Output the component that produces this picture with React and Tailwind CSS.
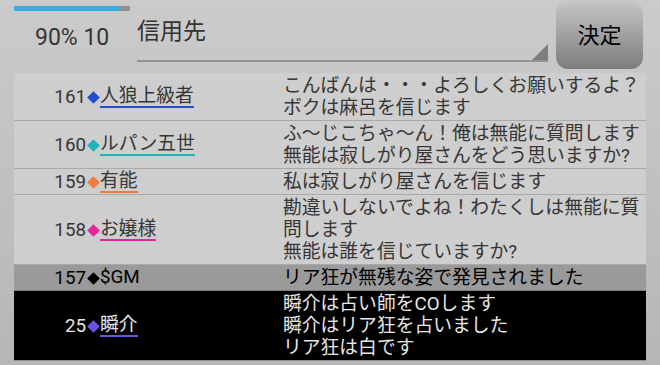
import React from 'react'

const rows = [
  {
    no: 161,
    name: '人狼上級者',
    mark: 'bg-[#2350c8]',
    line: 'border-[#2350c8]',
    theme: 'light',
    text: ['こんばんは・・・よろしくお願いするよ？', 'ボクは麻呂を信じます'],
  },
  {
    no: 160,
    name: 'ルパン五世',
    mark: 'bg-[#1fb5b5]',
    line: 'border-[#1fb5b5]',
    theme: 'light',
    text: ['ふ〜じこちゃ〜ん！俺は無能に質問します', '無能は寂しがり屋さんをどう思いますか?'],
  },
  {
    no: 159,
    name: '有能',
    mark: 'bg-[#f07b3c]',
    line: 'border-[#f07b3c]',
    theme: 'light',
    text: ['私は寂しがり屋さんを信じます'],
  },
  {
    no: 158,
    name: 'お嬢様',
    mark: 'bg-[#e2279b]',
    line: 'border-[#e2279b]',
    theme: 'light',
    text: ['勘違いしないでよね！わたくしは無能に質', '問します', '無能は誰を信じていますか?'],
  },
  {
    no: 157,
    name: '$GM',
    mark: 'bg-black',
    line: 'border-transparent',
    theme: 'gm',
    text: ['リア狂が無残な姿で発見されました'],
  },
  {
    no: 25,
    name: '瞬介',
    mark: 'bg-[#6a52e6]',
    line: 'border-[#6a52e6]',
    theme: 'dark',
    text: ['瞬介は占い師をCOします', '瞬介はリア狂を占いました', 'リア狂は白です'],
  },
]

const themes = {
  light: 'bg-[#cecece] text-[#363636] border-[#a9a9a9]',
  gm: 'bg-[#9a9a9a] text-black border-[#7c7c7c]',
  dark: 'bg-black text-[#e6e6e6] border-[#8e8e8e]',
}

function LogRow({ row }) {
  return (
    <div className={`flex border-b pt-[2px] pb-[1px] ${themes[row.theme]}`}>
      <div className="w-[269px] flex items-center">
        <span className="w-[72px] text-right leading-[20px]">{row.no}</span>
        <span className="w-[14px] flex justify-center">
          <span className={`w-[9px] h-[9px] rotate-45 ${row.mark}`} />
        </span>
        <span className={`leading-[20px] border-b-2 ${row.line}`}>{row.name}</span>
      </div>
      <div className="flex-1 leading-[22px]">
        {row.text.map((t, i) => (
          <div key={i} className="whitespace-nowrap">{t}</div>
        ))}
      </div>
    </div>
  )
}

export default function App() {
  return (
    <div
      className="w-[660px] h-[365px] overflow-hidden bg-linear-to-b from-[#cbcbcb] to-[#b6b6b6]"
      style={{ fontFamily: "Roboto, 'Noto Sans CJK JP', sans-serif" }}
    >
      {/* header */}
      <div className="flex h-[73px]">
        <div className="w-[123px] pl-[14px] pt-[6px]">
          <div className="w-[116px] h-[5px] flex bg-[#919191]">
            <div className="w-[105px] bg-[#39afdf]" />
          </div>
          <div className="pl-[21px] mt-[12px] text-[23px] leading-[30px] text-[#353535]">90% 10</div>
        </div>
        <div className="ml-[14px] w-[411px] h-[62px] pt-[17px] border-b-2 border-[#929292] relative">
          <div className="text-[23px] leading-[30px] text-[#333]">信用先</div>
          <svg className="absolute right-0 bottom-0" width="16" height="16" viewBox="0 0 16 16">
            <polygon points="16,0 16,16 0,16" fill="#7d7d7d" />
          </svg>
        </div>
        <button className="ml-[8px] mt-[1px] w-[87px] h-[68px] rounded-[12px] bg-linear-to-b from-[#c6c6c6] to-[#7d7d7d] text-[22px] text-black flex items-center justify-center">
          決定
        </button>
      </div>

      {/* log list */}
      <div className="ml-[14px] w-[632px] text-[18.8px]">
        {rows.map((r) => (
          <LogRow key={r.no} row={r} />
        ))}
      </div>
    </div>
  )
}
